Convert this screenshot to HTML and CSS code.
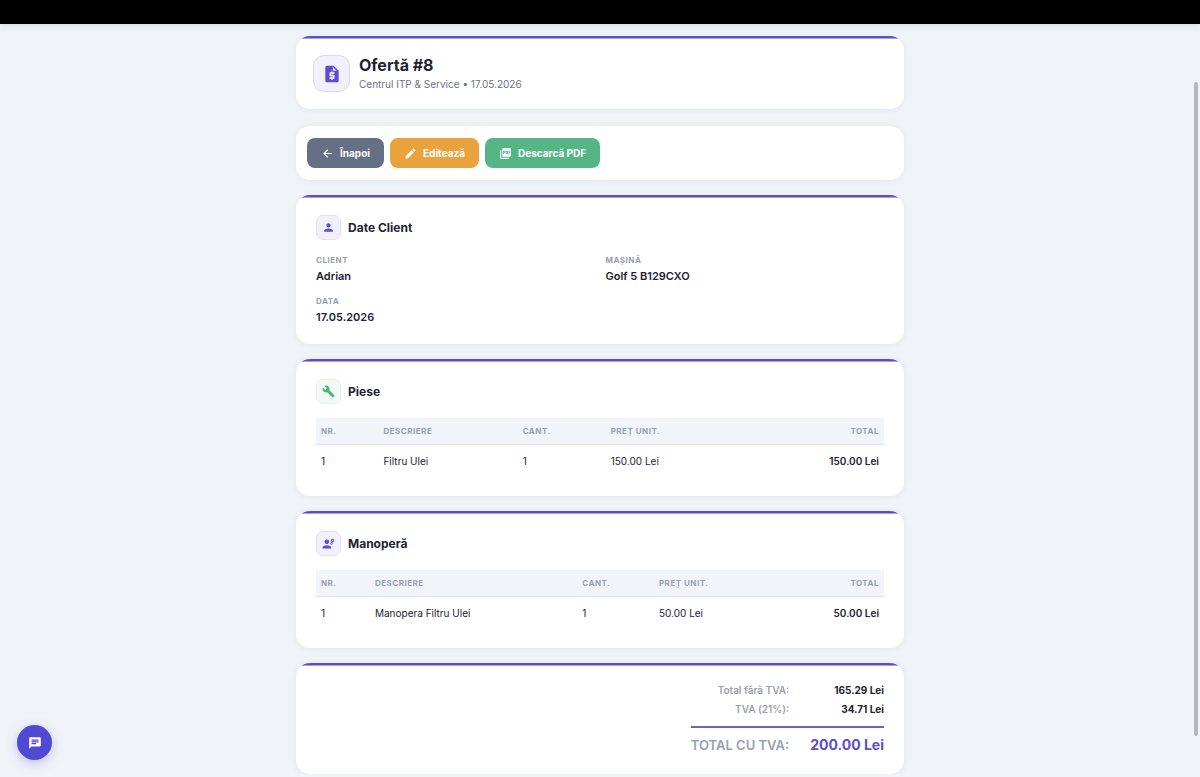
FILE: index.html
```html
<!DOCTYPE html>
<html lang="ro">
<head>
<meta charset="utf-8">
<meta name="viewport" content="width=device-width, initial-scale=1">
<title>Ofertă #8</title>
<link rel="stylesheet" href="styles.css">
</head>
<body>
<div class="topbar"></div>

<main class="page">
  <header class="card card-accent page-header">
    <span class="header-icon">
      <svg viewBox="0 0 24 24"><path fill-rule="evenodd" d="M14 2H6c-1.100 0-2 .9-2 2v16c0 1.100.89 2 1.990 2H18c1.100 0 2-.9 2-2V8l-6-6zm1 10h-4v1h3c.55 0 1 .45 1 1v3c0 .55-.45 1-1 1h-1v1h-2v-1H9v-2h4v-1h-3c-.55 0-1-.45-1-1v-3c0-.55.45-1 1-1h1V9h2v1h2v2zm-2-4V3.500L17.500 8H13z"/></svg>
    </span>
    <div>
      <h1>Ofertă #8</h1>
      <p class="subtitle">Centrul ITP &amp; Service • 17.05.2026</p>
    </div>
  </header>

  <nav class="card actions">
    <a href="#" class="btn btn-back">
      <svg viewBox="0 0 24 24"><path d="M20 11H7.830l5.590-5.590L12 4l-8 8 8 8 1.410-1.410L7.830 13H20v-2z"/></svg>
      Înapoi
    </a>
    <a href="#" class="btn btn-edit">
      <svg viewBox="0 0 24 24"><path d="M3 17.250V21h3.750L17.810 9.940l-3.750-3.750L3 17.250zM20.710 7.040c.39-.39.39-1.020 0-1.410l-2.340-2.340c-.39-.39-1.020-.39-1.410 0l-1.830 1.830 3.750 3.750 1.830-1.830z"/></svg>
      Editează
    </a>
    <a href="#" class="btn btn-pdf">
      <svg viewBox="0 0 24 24"><path d="M20 2H8c-1.100 0-2 .9-2 2v12c0 1.100.9 2 2 2h12c1.100 0 2-.9 2-2V4c0-1.100-.9-2-2-2zm-8.500 7.500c0 .83-.67 1.500-1.500 1.500H9v2H7.500V7H10c.83 0 1.500.67 1.500 1.500v1zm5 2c0 .83-.67 1.500-1.500 1.500h-2.500V7H15c.83 0 1.500.67 1.500 1.500v3zm4-3H19v1h1.500V11H19v2h-1.500V7h3v1.500zM9 9.500h1v-1H9v1zM4 6H2v14c0 1.100.9 2 2 2h14v-2H4V6zm10 5.500h1v-3h-1v3z"/></svg>
      Descarcă PDF
    </a>
  </nav>

  <section class="card card-accent section">
    <div class="section-title">
      <span class="section-icon">
        <svg viewBox="0 0 24 24"><path d="M12 12c2.210 0 4-1.790 4-4s-1.790-4-4-4-4 1.790-4 4 1.790 4 4 4zm0 2c-2.670 0-8 1.340-8 4v2h16v-2c0-2.660-5.330-4-8-4z"/></svg>
      </span>
      <h2>Date Client</h2>
    </div>
    <dl class="info">
      <div><dt>Client</dt><dd>Adrian</dd></div>
      <div><dt>Mașină</dt><dd>Golf 5 B129CXO</dd></div>
      <div><dt>Data</dt><dd>17.05.2026</dd></div>
    </dl>
  </section>

  <section class="card card-accent section">
    <div class="section-title">
      <span class="section-icon green">
        <svg viewBox="0 0 24 24"><path d="M22.700 19l-9.100-9.100c.9-2.300.4-5-1.500-6.900-2-2-5-2.400-7.400-1.300L9 6 6 9 1.600 4.700C.4 7.100.9 10.100 2.900 12.100c1.900 1.900 4.600 2.400 6.900 1.500l9.100 9.100c.4.4 1 .4 1.400 0l2.300-2.300c.5-.4.5-1.100.1-1.400z"/></svg>
      </span>
      <h2>Piese</h2>
    </div>
    <table class="items parts">
      <thead>
        <tr><th>Nr.</th><th>Descriere</th><th>Cant.</th><th>Preț unit.</th><th class="amount">Total</th></tr>
      </thead>
      <tbody>
        <tr><td>1</td><td>Filtru Ulei</td><td>1</td><td>150.00 Lei</td><td class="amount">150.00 Lei</td></tr>
      </tbody>
    </table>
  </section>

  <section class="card card-accent section">
    <div class="section-title">
      <span class="section-icon">
        <svg viewBox="0 0 24 24"><path d="M9 15c-2.670 0-8 1.340-8 4v2h16v-2c0-2.660-5.330-4-8-4zM4.740 9H5c0 2.210 1.790 4 4 4s4-1.790 4-4h.26c.27 0 .49-.22.49-.49v-.02c0-.27-.22-.49-.49-.49H13c0-1.480-.81-2.750-2-3.450v.95c0 .28-.22.5-.5.5s-.5-.22-.5-.5V4.140C9.680 4.060 9.350 4 9 4s-.68.06-1 .14V5.500c0 .28-.22.5-.5.5S7 5.780 7 5.500v-.95C5.810 5.250 5 6.520 5 8h-.26c-.27 0-.49.22-.49.49v.03c0 .26.22.48.49.48z"/><path fill-rule="evenodd" d="M21.980 6.230l.93-.83-.75-1.300-1.190.39c-.14-.11-.3-.2-.47-.27L20.250 3h-1.500l-.25 1.220c-.17.07-.33.16-.48.27l-1.180-.39-.75 1.300.93.83c-.02.17-.02.35 0 .52l-.93.850.75 1.300 1.200-.38c.13.1.28.18.43.25l.28 1.230h1.500l.27-1.220c.16-.07.3-.15.44-.25l1.190.38.75-1.300-.93-.85c.03-.18.02-.35.010-.53zM19.500 7.750a1.250 1.250 0 110-2.500 1.250 1.250 0 010 2.500zM19.400 10.790l-.85-.28c-.1-.08-.21-.14-.33-.19L18.040 9.450h-1.070l-.18.870c-.12.05-.24.12-.34.19l-.84-.28-.54.93.66.59c-.01.13-.01.25 0 .37l-.66.610.54.93.86-.27c.1.07.2.13.31.18l.18.880h1.070l.19-.87c.11-.05.22-.11.32-.18l.85.270.54-.93-.66-.61c.010-.13.010-.25 0-.37l.66-.59-.53-.93zM17.500 12.840a.89.89 0 110-1.780.89.89 0 010 1.780z"/></svg>
      </span>
      <h2>Manoperă</h2>
    </div>
    <table class="items labor">
      <thead>
        <tr><th>Nr.</th><th>Descriere</th><th>Cant.</th><th>Preț unit.</th><th class="amount">Total</th></tr>
      </thead>
      <tbody>
        <tr><td>1</td><td>Manopera Filtru Ulei</td><td>1</td><td>50.00 Lei</td><td class="amount">50.00 Lei</td></tr>
      </tbody>
    </table>
  </section>

  <section class="card card-accent section">
    <table class="totals">
      <tbody>
        <tr><th scope="row">Total fără TVA:</th><td>165.29 Lei</td></tr>
        <tr><th scope="row">TVA (21%):</th><td>34.71 Lei</td></tr>
      </tbody>
      <tfoot>
        <tr><th scope="row">TOTAL CU TVA:</th><td>200.00 Lei</td></tr>
      </tfoot>
    </table>
  </section>
</main>

<button type="button" class="chat" aria-label="Chat">
  <svg viewBox="0 0 24 24"><path d="M20 2H4c-1.100 0-1.990.9-1.990 2L2 22l4-4h14c1.100 0 2-.9 2-2V4c0-1.100-.9-2-2-2zM6 9h12v2H6V9zm8 5H6v-2h8v2zm4-6H6V6h12v2z"/></svg>
</button>
<div class="scroll-thumb"></div>
</body>
</html>
```

FILE: styles.css
```css
* {
  box-sizing: border-box;
}

body {
  margin: 0;
  background: #f0f4f8;
  color: #1e2235;
  font-family: Inter, "Liberation Sans", sans-serif;
  font-size: 10px;
  line-height: 16px;
}

h1, h2, p, dl, dd {
  margin: 0;
}

svg {
  display: block;
  fill: currentColor;
}

.topbar {
  height: 24px;
  background: #000;
  box-shadow: 0 1px 8px rgba(0, 0, 0, 0.12);
}

.page {
  max-width: 608px;
  margin: 0 auto;
  padding-top: 12px;
}

/* cards */
.card {
  background: #fff;
  border-radius: 14px;
  margin-bottom: 15px;
  box-shadow: 0 1px 6px rgba(30, 40, 80, 0.07);
  overflow: hidden;
}

.card:last-child {
  margin-bottom: 0;
}

.card-accent::before {
  content: "";
  display: block;
  height: 3px;
  background: linear-gradient(#5b4dcb 2px, #a9a1ea 2px);
}

.page-header {
  display: grid;
  grid-template-columns: auto 1fr;
  column-gap: 9px;
  align-items: center;
  padding-bottom: 17px;
  margin-bottom: 17px;
}

.page-header::before {
  grid-column: 1 / -1;
  margin-bottom: 16px;
}

.header-icon {
  display: grid;
  place-items: center;
  width: 37px;
  height: 37px;
  margin-left: 17px;
  border: 1px solid #dcd7f6;
  border-radius: 11px;
  background: #f2f0fd;
  color: #5b4dd2;
}

.header-icon svg {
  width: 20px;
  height: 20px;
}

h1 {
  margin-bottom: 1px;
  font-size: 16px;
  line-height: 20px;
  font-weight: 700;
}

.subtitle {
  color: #6b7286;
}

/* buttons */
.actions {
  display: flex;
  flex-wrap: wrap;
  gap: 6px;
  padding: 12px 11px;
}

.btn {
  display: flex;
  align-items: center;
  gap: 6px;
  height: 30px;
  padding: 0 14px;
  border-radius: 8px;
  color: #fff;
  font-weight: 700;
  text-decoration: none;
}

.btn svg {
  width: 13px;
  height: 13px;
}

.btn-back { background: #667085; }
.btn-edit { background: #e8a33d; }
.btn-pdf { background: #55b685; }

/* sections */
.section {
  padding-bottom: 18px;
}

.section-title {
  display: flex;
  align-items: center;
  gap: 7px;
  padding: 17px 20px 14px;
}

.section-icon {
  display: grid;
  place-items: center;
  width: 25px;
  height: 25px;
  border: 1px solid #e2def8;
  border-radius: 7px;
  background: #f2f0fd;
  color: #5b4dd2;
}

.section-icon.green {
  border-color: #dff1e8;
  background: #f2faf6;
  color: #4fb182;
}

.section-icon svg {
  width: 13px;
  height: 13px;
}

h2 {
  font-size: 12px;
  line-height: 17px;
  font-weight: 700;
}

.info {
  display: grid;
  grid-template-columns: 1fr 1fr;
  gap: 10px 11px;
  padding: 0 20px;
}

dt,
.items th {
  color: #98a0b3;
  font-size: 8px;
  font-weight: 700;
  letter-spacing: 0.5px;
  text-transform: uppercase;
}

dt {
  line-height: 13px;
}

dd {
  font-size: 11px;
  line-height: 18px;
  font-weight: 600;
}

/* tables */
.items {
  width: calc(100% - 40px);
  margin: 0 20px;
  border-collapse: collapse;
}

.items th {
  padding: 5px;
  background: #f1f4f9;
  border-bottom: 1px solid #dfe4ec;
  text-align: left;
}

.items td {
  padding: 8px 5px 9px;
}

.items .amount {
  text-align: right;
}

.items td.amount {
  font-weight: 600;
}

.parts th:nth-child(1) { width: 11%; }
.parts th:nth-child(2) { width: 24.5%; }
.parts th:nth-child(3) { width: 15.5%; }

.labor th:nth-child(1) { width: 9.5%; }
.labor th:nth-child(2) { width: 36.5%; }
.labor th:nth-child(3) { width: 13.5%; }

/* totals */
.totals {
  margin: 16px 20px 0 auto;
  border-collapse: collapse;
  text-align: right;
}

.totals th {
  padding: 0 21px 3px 0;
  color: #98a0b3;
  font-weight: 600;
}

.totals td {
  padding: 0 0 3px;
  font-weight: 700;
}

.totals tbody tr:last-child > * {
  padding-bottom: 9px;
}

.totals tfoot {
  border-top: 2px solid #6d60cc;
  font-size: 14px;
}

.totals tfoot th {
  padding-top: 9px;
  font-size: 13px;
}

.totals tfoot td {
  padding-top: 9px;
  color: #5b4dcb;
}

/* floating parts */
.chat {
  position: fixed;
  left: 17px;
  bottom: 17px;
  display: grid;
  place-items: center;
  width: 35px;
  height: 35px;
  padding: 0;
  border: 0;
  border-radius: 50%;
  background: #5148d4;
  color: #fff;
  box-shadow: 0 3px 12px rgba(81, 72, 212, 0.3);
}

.chat svg {
  width: 14px;
  height: 14px;
}

.scroll-thumb {
  position: fixed;
  top: 82px;
  right: 2px;
  bottom: 41px;
  width: 4px;
  border-radius: 2px;
  background: #b4b8bc;
}
```
